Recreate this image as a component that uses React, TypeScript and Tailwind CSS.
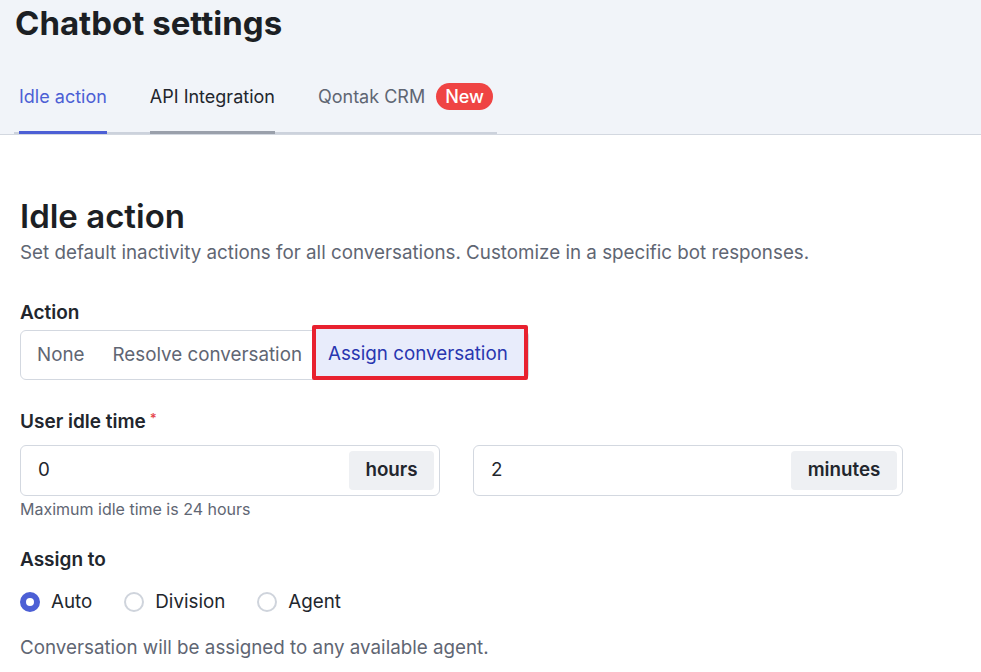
import { useState } from 'react'

const tabs = ['Idle action', 'API Integration', 'Qontak CRM']
const actions = ['None', 'Resolve conversation', 'Assign conversation']
const assignees = ['Auto', 'Division', 'Agent']

function UnitInput({ value, unit, width, unitWidth }: { value: string; unit: string; width: string; unitWidth: string }) {
  return (
    <div className={`flex h-[51px] ${width} items-stretch rounded-[6px] border border-[#d3d8e0] bg-white p-[5px] pl-[17px]`}>
      <div className="flex flex-1 items-center text-[18.8px] text-[#22262d]">{value}</div>
      <div className={`flex ${unitWidth} items-center justify-center rounded-[4px] bg-[#eef0f3] text-[18.8px] font-semibold text-[#22262d]`}>
        {unit}
      </div>
    </div>
  )
}

export default function App() {
  const [tab, setTab] = useState(0)
  const [action, setAction] = useState(2)
  const [assignee, setAssignee] = useState(0)

  return (
    <div className="min-h-[672px] bg-white font-['Inter',sans-serif] text-[#22262d]">
      <div className="border-b border-[#d3d8e0] bg-[#f1f4f9]">
        <h1 className="px-[15px] pt-[3px] text-[33px] font-bold leading-[40px] text-[#1c1f24]">Chatbot settings</h1>
        <div className="ml-[14px] mt-[37px] flex w-[483px] gap-[43px] border-b-[2px] border-[#ccd2dc] pl-[5px]">
          {tabs.map((t, i) => (
            <button
              key={t}
              onClick={() => setTab(i)}
              className={`-mb-[2px] flex h-[54px] items-start gap-[11px] border-b-[3px] pt-[4px] text-[18px] leading-[26px] ${
                tab === i
                  ? 'border-[#4c5fd5] text-[#4c5fd5]'
                  : i === 1
                    ? 'border-[#9aa0ab] text-[#22262d]'
                    : 'border-transparent text-[#5f6673]'
              }`}
            >
              {t}
              {i === 2 && (
                <span className="-mt-[1px] rounded-full bg-[#ef4444] px-[9px] text-[18px] font-medium leading-[27px] text-white">
                  New
                </span>
              )}
            </button>
          ))}
        </div>
      </div>

      <div className="px-[20px] pt-[62px]">
        <h2 className="text-[33px] font-semibold leading-[38px] text-[#1c1f24]">Idle action</h2>
        <p className="mt-[6px] text-[18.8px] leading-[24px] text-[#5f6673]">
          Set default inactivity actions for all conversations. Customize in a specific bot responses.
        </p>

        <div className="mt-[36px] text-[19px] font-semibold leading-[24px]">Action</div>
        <div className="mt-[5px] flex h-[50px] w-fit items-center rounded-[6px] border border-[#d3d8e0] bg-white pl-[2px]">
          {actions.map((a, i) =>
            action === i ? (
              <button
                key={a}
                onClick={() => setAction(i)}
                className="-mb-[1px] -ml-[4px] flex h-[55px] items-center self-end rounded-[2px] border-[4px] border-[#e8212f] bg-[#e8ecfb] pl-[12px] pr-[16px] pt-[4px] text-[18.8px] text-[#2836b0]"
              >
                {a}
              </button>
            ) : (
              <button
                key={a}
                onClick={() => setAction(i)}
                className="flex h-[42px] items-center px-[14px] text-[18.8px] text-[#5f6673]"
              >
                {a}
              </button>
            ),
          )}
        </div>

        <div className="mt-[30px] flex items-start text-[19px] font-semibold leading-[24px]">
          User idle time
          <span className="ml-[4px] -mt-[4px] text-[13px] text-[#e5484d]">*</span>
        </div>
        <div className="mt-[11px] flex gap-[33px]">
          <UnitInput value="0" unit="hours" width="w-[420px]" unitWidth="w-[85px]" />
          <UnitInput value="2" unit="minutes" width="w-[430px]" unitWidth="w-[106px]" />
        </div>
        <p className="mt-[3px] text-[16px] leading-[20px] text-[#5f6673]">Maximum idle time is 24 hours</p>

        <div className="mt-[29px] text-[19px] font-semibold leading-[24px]">Assign to</div>
        <div className="mt-[18px] flex items-center gap-[32px]">
          {assignees.map((a, i) => (
            <button key={a} onClick={() => setAssignee(i)} className="flex items-center gap-[11px] text-[18.8px] leading-[24px]">
              <span
                className={`h-[20px] w-[20px] rounded-full ${
                  assignee === i ? 'border-[6px] border-[#4c5fd5] bg-white' : 'border-[2px] border-[#cfd4dc] bg-white'
                }`}
              />
              {a}
            </button>
          ))}
        </div>
        <p className="mt-[22px] text-[18.8px] leading-[24px] text-[#5f6673]">Conversation will be assigned to any available agent.</p>
      </div>
    </div>
  )
}
